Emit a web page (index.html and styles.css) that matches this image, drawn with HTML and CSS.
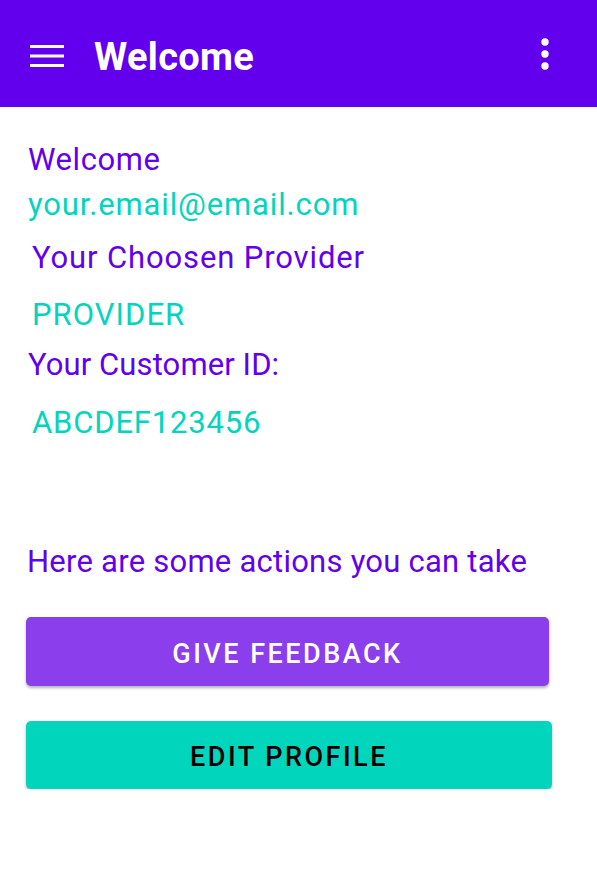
FILE: index.html
```html
<!DOCTYPE html>
<html>
<head>
<meta charset="utf-8">
<link rel="stylesheet" href="styles.css">
</head>
<body>
<header class="appbar">
  <svg class="menu" width="34" height="24" viewBox="0 0 34 24"><rect x="0" y="1" width="34" height="3" fill="#fff"/><rect x="0" y="10.5" width="34" height="3" fill="#fff"/><rect x="0" y="20" width="34" height="3" fill="#fff"/></svg>
  <h1 class="title">Welcome</h1>
  <svg class="more" width="10" height="34" viewBox="0 0 10 34"><circle cx="5" cy="5" r="3.7" fill="#fff"/><circle cx="5" cy="17" r="3.7" fill="#fff"/><circle cx="5" cy="29" r="3.7" fill="#fff"/></svg>
</header>
<main class="content">
  <p class="line purple l-welcome">Welcome</p>
  <p class="line teal l-email">your.email@email.com</p>
  <p class="line purple l-plabel indent">Your Choosen Provider</p>
  <p class="line teal l-provider indent">PROVIDER</p>
  <p class="line purple l-clabel">Your Customer ID:</p>
  <p class="line teal l-id indent">ABCDEF123456</p>
  <p class="line purple l-actions">Here are some actions you can take</p>
  <button class="btn btn-feedback">GIVE FEEDBACK</button>
  <button class="btn btn-edit">EDIT PROFILE</button>
</main>
</body>
</html>
```
FILE: styles.css
```css
* { box-sizing: border-box; }
html, body { margin: 0; padding: 0; background: #fff; }
body { font-family: Roboto, "Noto Sans", sans-serif; width: 597px; }

.appbar {
  height: 107px;
  background: #6200ee;
  display: flex;
  align-items: center;
  padding: 0 0 0 30px;
}
.menu { display: block; margin-top: 5px; }
.title {
  margin: 6px 0 0 30px;
  color: #fff;
  font-size: 38px;
  font-weight: 700;
  letter-spacing: 0.3px;
  flex: 1;
  line-height: 1;
}
.more { display: block; margin-right: 47px; margin-top: 0; }

.content { padding: 33px 0 0 28px; }
.line {
  margin: 0;
  font-size: 31px;
  line-height: 40px;
  height: 40px;
  white-space: nowrap;
}
.purple { color: #6200ee; }
.teal { color: #03d4bd; }
.indent { padding-left: 4px; }
.l-welcome { letter-spacing: 0.55px; }
.l-email { margin-top: 5px; letter-spacing: 0.85px; }
.l-plabel { margin-top: 13px; letter-spacing: 0.87px; }
.l-provider { margin-top: 17px; letter-spacing: 1.04px; }
.l-clabel { margin-top: 10px; letter-spacing: 0.1px; }
.l-id { margin-top: 18px; letter-spacing: 0.83px; }
.l-actions { margin-top: 99px; margin-left: -1px; letter-spacing: 0.24px; }

.btn {
  display: flex;
  align-items: center;
  justify-content: center;
  margin-left: -2px;
  border: none;
  border-radius: 5px;
  font-family: Roboto, sans-serif;
  font-weight: 500;
  font-size: 27px;
  letter-spacing: 2.5px;
  box-shadow: 0 2px 3px rgba(0,0,0,0.3);
  padding: 4px 0 0 0;
}
.btn-feedback {
  margin-top: 35px;
  width: 523px;
  height: 69px;
  background: #8b3eeb;
  color: #fff;
}
.btn-edit {
  margin-top: 35px;
  width: 526px;
  height: 68px;
  background: #01d6bd;
  color: #000;
}
```
